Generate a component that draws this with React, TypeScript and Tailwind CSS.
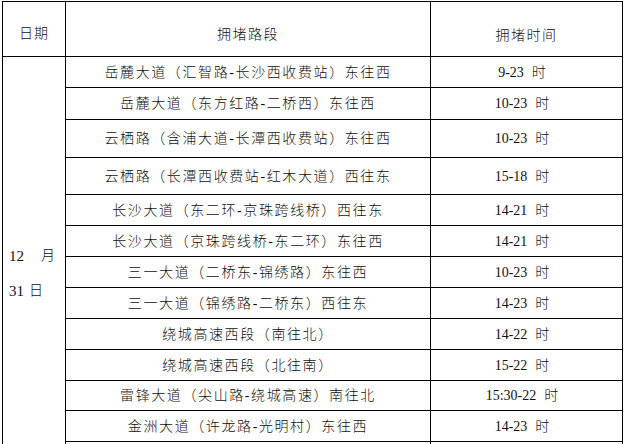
import React from "react";

const rows: [string, string, string][] = [
  ["岳麓大道（汇智路-长沙西收费站）东往西", "9-23", "h-[31px]"],
  ["岳麓大道（东方红路-二桥西）东往西", "10-23", "h-[32px]"],
  ["云栖路（含浦大道-长潭西收费站）东往西", "10-23", "h-[38px]"],
  ["云栖路（长潭西收费站-红木大道）西往东", "15-18", "h-[37px]"],
  ["长沙大道（东二环-京珠跨线桥）西往东", "14-21", "h-[31px]"],
  ["长沙大道（京珠跨线桥-东二环）东往西", "14-21", "h-[31px]"],
  ["三一大道（二桥东-锦绣路）东往西", "10-23", "h-[31px]"],
  ["三一大道（锦绣路-二桥东）西往东", "14-23", "h-[31px]"],
  ["绕城高速西段（南往北）", "14-22", "h-[31px]"],
  ["绕城高速西段（北往南）", "15-22", "h-[31px]"],
  ["雷锋大道（尖山路-绕城高速）南往北", "15:30-22", "h-[30px]"],
  ["金洲大道（许龙路-光明村）东往西", "14-23", "h-[31px]"],
];

export default function App() {
  return (
    <div className="w-[625px] h-[444px] overflow-hidden bg-white font-['Liberation_Serif','Noto_Sans_CJK_SC',serif] text-[14px] text-[#111] font-light">
      <div className="ml-[2px] mt-[1px] w-[621px] border-l border-t border-black">
        <div className="flex h-[55px]">
          <div className="w-[63px] border-r border-b border-black flex items-center justify-center pt-[9px] tracking-[1px]">
            日期
          </div>
          <div className="w-[365px] border-r border-b border-black flex items-center justify-center pt-[11px] tracking-[1.5px]">
            拥堵路段
          </div>
          <div className="w-[192px] border-r border-b border-black flex items-center justify-center pt-[12px] tracking-[1.5px]">
            拥堵时间
          </div>
        </div>
        <div className="flex">
          <div className="w-[63px] border-r border-black flex flex-col pt-[189px] pl-[6px] pr-[10px] gap-[15px] text-[15px]">
            <div className="flex justify-between h-[20px] leading-[20px]">
              <span>12</span>
              <span className="text-[14px]">月</span>
            </div>
            <div className="flex h-[20px] leading-[20px]">
              <span>31</span>
              <span className="ml-[5px] text-[14px]">日</span>
            </div>
          </div>
          <div className="flex flex-col">
            {rows.map(([road, time, h], i) => (
              <div key={i} className={`flex ${h}`}>
                <div className="w-[365px] border-r border-b border-black flex items-center justify-center tracking-[1.6px]">
                  {road}
                </div>
                <div className="w-[192px] border-r border-b border-black flex items-center justify-center pr-[9px]">
                  <span>{time}</span>
                  <span className="ml-[8px]">时</span>
                </div>
              </div>
            ))}
            <div className="flex h-[40px]">
              <div className="w-[365px] border-r border-black" />
              <div className="w-[192px] border-r border-black" />
            </div>
          </div>
        </div>
      </div>
    </div>
  );
}
